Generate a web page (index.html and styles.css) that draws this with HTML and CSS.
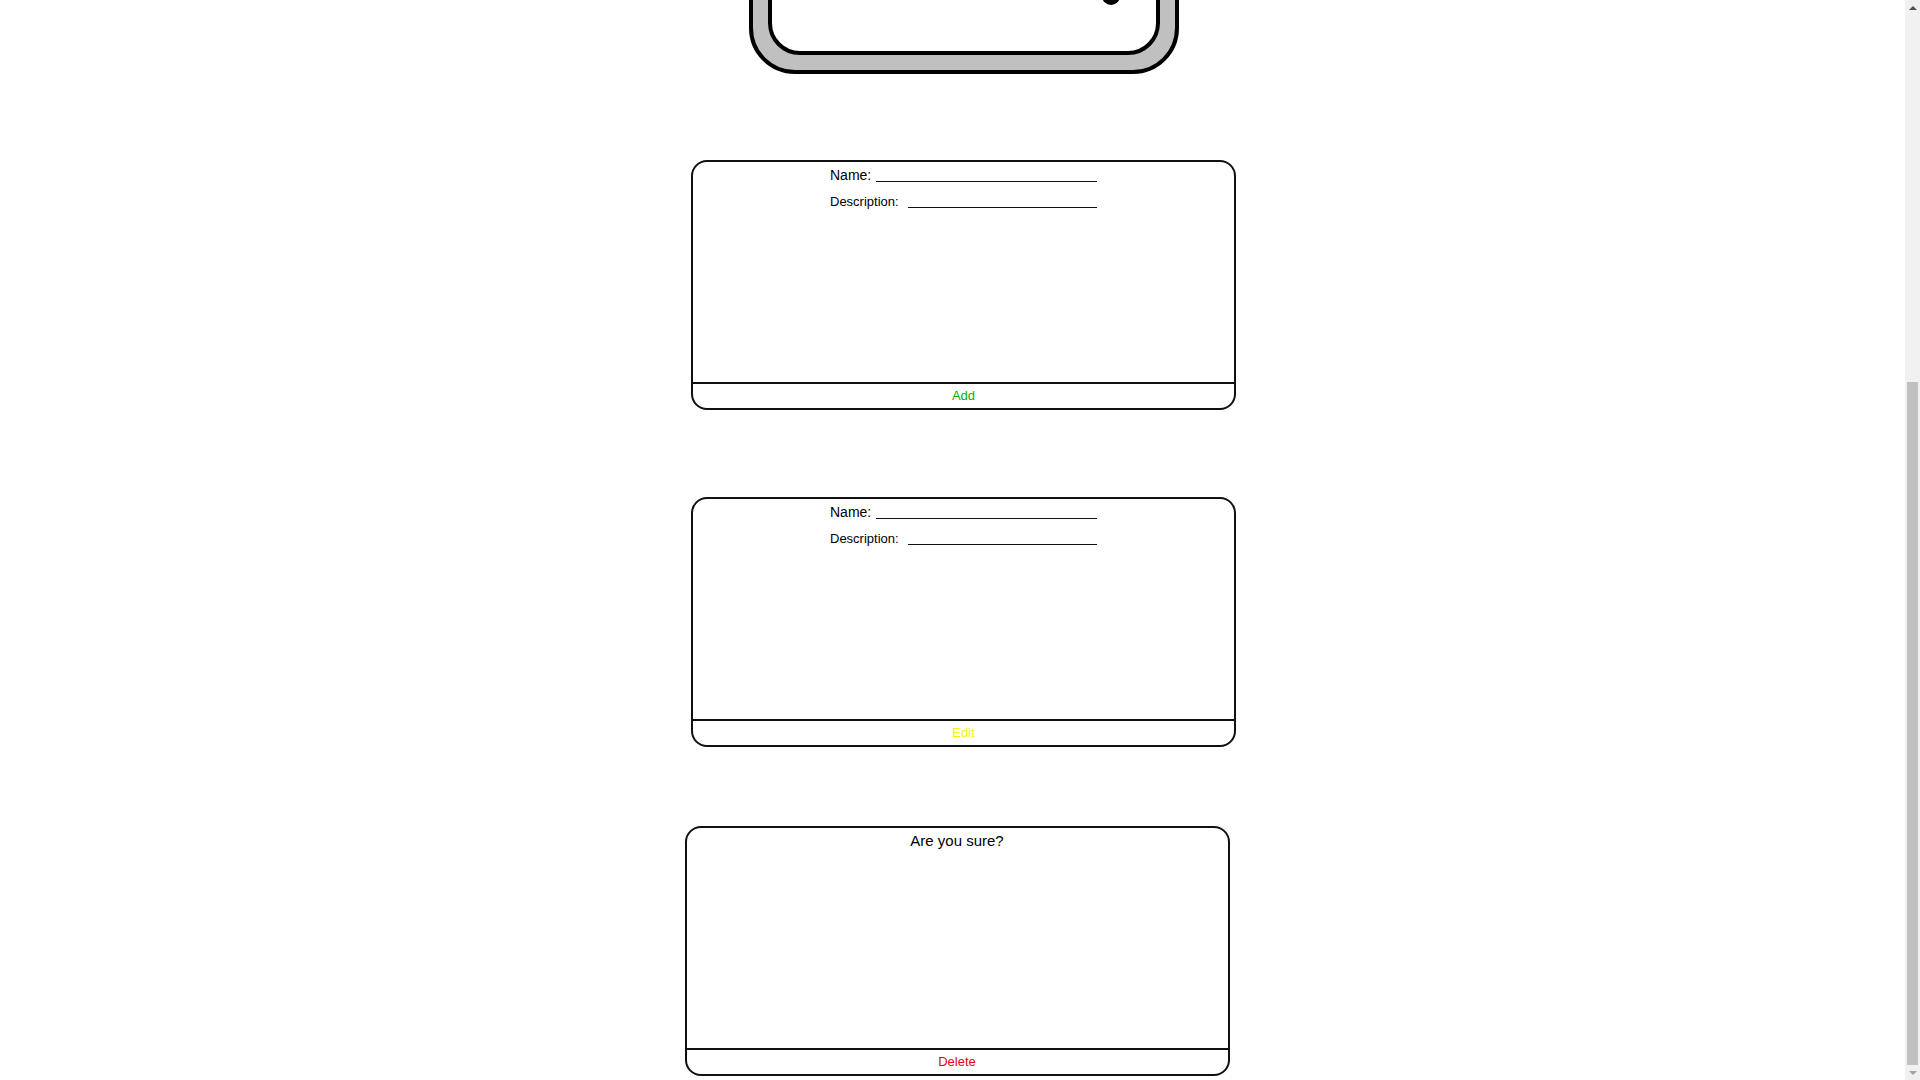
FILE: index.html
```html
<!DOCTYPE html>
<html lang="en">

<head>
  <meta charset="UTF-8">
  <meta name="viewport" content="width=device-width, initial-scale=1.0">
  <title>Mockups</title>
  <link rel="stylesheet" href="styles.css">
</head>

<body>
  <div class="window">
    <div class="page">
      <!-- phone mockup, only its bottom edge is in view -->
      <div class="phone">
        <div class="screen"><span class="dot"></span></div>
      </div>

      <div class="dialog dialog-add">
        <div class="fields">
          <div class="row row-name"><label>Name:</label><span class="blank">&nbsp;</span></div>
          <div class="row row-desc"><label>Description:</label><span class="blank">&nbsp;</span></div>
        </div>
        <div class="footer add">Add</div>
      </div>

      <div class="dialog dialog-edit">
        <div class="fields">
          <div class="row row-name"><label>Name:</label><span class="blank">&nbsp;</span></div>
          <div class="row row-desc"><label>Description:</label><span class="blank">&nbsp;</span></div>
        </div>
        <div class="footer edit">Edit</div>
      </div>

      <div class="dialog dialog-delete">
        <div class="fields">
          <h3 class="question">Are you sure?</h3>
        </div>
        <div class="footer delete">Delete</div>
      </div>
    </div>

    <div class="scrollbar">
      <span class="arrow up"></span>
      <div class="track"><div class="thumb"></div></div>
      <span class="arrow down"></span>
    </div>
  </div>
</body>

</html>
```

FILE: styles.css
```css
* {
  margin: 0;
  padding: 0;
  box-sizing: border-box;
}

body {
  font-family: "Liberation Sans", Arial, sans-serif;
  color: #000;
  background-color: #ffffff;
}

.window {
  display: flex;
  height: 100vh;
  overflow: hidden;
}

/* content is taller than the window, we look at its bottom part */
.page {
  flex: 1;
  display: flex;
  flex-direction: column;
  align-items: center;
  justify-content: flex-end;
  overflow: hidden;
  padding-bottom: 4px;
}

.page > div {
  flex-shrink: 0;
}

.phone {
  width: 430px;
  height: 560px;
  margin-left: 22px;
  margin-bottom: 86px;
  padding: 15px;
  border: 4px solid #000;
  border-radius: 46px;
  background-color: #c0c0c0;
}

.screen {
  height: 100%;
  display: flex;
  align-items: flex-end;
  justify-content: flex-end;
  padding: 0 36px 46px 0;
  border: 4px solid #000;
  border-radius: 32px;
  background-color: #ffffff;
}

.dot {
  width: 18px;
  height: 18px;
  border-radius: 9px;
  background-color: #000;
}

.dialog {
  display: flex;
  flex-direction: column;
  width: 545px;
  height: 250px;
  border: 2px solid #111;
  border-radius: 16px;
  background-color: #ffffff;
}

.dialog-add {
  margin-left: 22px;
  margin-bottom: 87px;
}

.dialog-edit {
  margin-left: 22px;
  margin-bottom: 79px;
}

.dialog-delete {
  margin-left: 9px;
}

.fields {
  flex: 1;
  width: 267px;
  margin: 0 auto;
  padding-top: 4px;
}

.row {
  display: flex;
  align-items: baseline;
  height: 18px;
}

.row label {
  line-height: 18px;
  white-space: nowrap;
}

.row-name {
  font-size: 14px;
}

.row-desc {
  margin-top: 9px;
  font-size: 13px;
}

.blank {
  flex: 1;
  border-bottom: 1px solid #111;
}

.row-name .blank {
  margin-left: 5px;
  line-height: 12px;
}

.row-desc .blank {
  margin-left: 9px;
  line-height: 10px;
}

.question {
  width: 545px;
  margin-left: -139px;
  font-size: 15px;
  font-weight: 400;
  line-height: 18px;
  text-align: center;
}

.footer {
  height: 26px;
  border-top: 2px solid #111;
  font-size: 13px;
  line-height: 24px;
  text-align: center;
}

.add {
  color: #00b300;
}

.edit {
  color: #f5f500;
}

.delete {
  color: #e8001c;
}

/* browser scroll bar, thumb down at the end */
.scrollbar {
  display: flex;
  flex-direction: column;
  width: 15px;
  background-color: #f1f1f1;
}

.arrow {
  display: flex;
  justify-content: center;
  align-items: center;
  height: 15px;
}

.arrow::before {
  content: "";
  border-left: 4px solid transparent;
  border-right: 4px solid transparent;
}

.up::before {
  border-bottom: 4px solid #505050;
}

.down::before {
  border-top: 4px solid #a3a3a3;
}

.track {
  flex: 1;
  display: flex;
  flex-direction: column;
  justify-content: flex-end;
  padding: 0 2px;
}

.thumb {
  height: 683px;
  background-color: #c1c1c1;
}
```
